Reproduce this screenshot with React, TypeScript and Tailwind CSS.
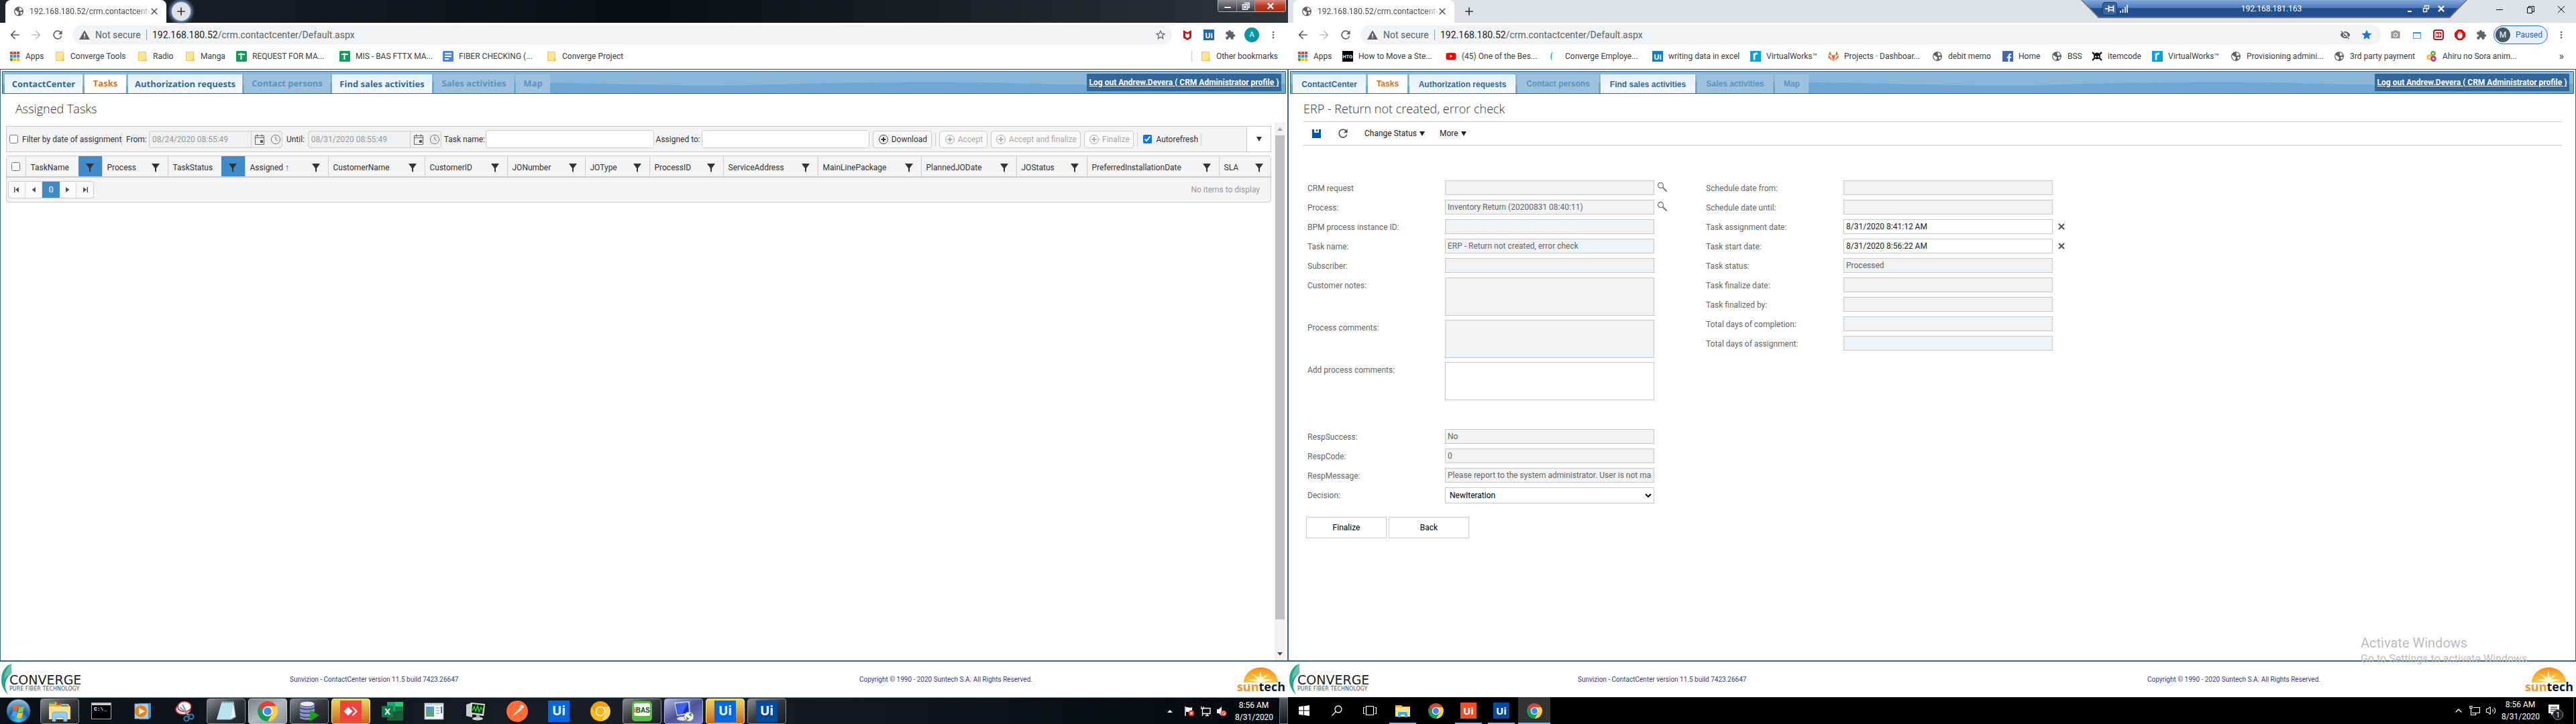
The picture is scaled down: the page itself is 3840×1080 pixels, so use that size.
import React from "react";
import { Clock, ChevronUp, Volume2, X } from "lucide-react";
import { FaYoutube, FaGitlab, FaFacebookF } from "react-icons/fa";
import { MdAdd, MdArrowBack, MdArrowForward, MdClose, MdExtension, MdMoreVert, MdPhotoCamera, MdRefresh, MdStar, MdStarBorder, MdVisibilityOff } from "react-icons/md";

/* ---------- small drawings ---------- */

function Globe() {
  return (
    <svg viewBox="0 0 16 16" className="size-4 shrink-0">
      <circle cx="8" cy="8" r="7" fill="#5f6368" />
      <path d="M2.2 6.5c2 .6 3 .4 3.4 1.6.4 1 1.700.4 2.300 1.400.5.9-.3 1.500-.5 2.500-.1.8-.4 1.200-.9 1.800C3.800 13 2 10.300 2.200 6.500zM8.500 2.200c1.500-.2 4.200 1.300 4.900 3.800-.9.7-1.700.2-2.600.8-.8.6-1.900.3-2.100-.6-.2-.8.700-1.200.5-2-.1-.8-1.200-.9-.7-2zM10.500 9c1-.5 2.200-.2 3.200.3-.5 1.500-1.300 2.700-2.600 3.500-.6-1.200-1.300-3-.6-3.800z" fill="#fff" />
    </svg>
  );
}

function Warning() {
  return (
    <svg viewBox="0 0 16 14" className="h-[14px] w-4 shrink-0">
      <path d="M8 0l8 14H0z" fill="#5f6368" />
      <path d="M7.200 5h1.600v4.500H7.200zM7.200 10.500h1.600v1.600H7.200z" fill="#f1f3f4" />
    </svg>
  );
}

function AppsGrid() {
  const c = ["#ea4335", "#ea4335", "#ea4335", "#34a853", "#4285f4", "#4285f4", "#34a853", "#fbbc05", "#fbbc05"];
  return (
    <svg viewBox="0 0 16 16" className="size-4 shrink-0">
      {c.map((f, i) => (
        <rect key={i} x={1 + (i % 3) * 5} y={1 + Math.floor(i / 3) * 5} width="4" height="4" fill={f} />
      ))}
    </svg>
  );
}

function Folder() {
  return (
    <svg viewBox="0 0 16 16" className="size-4 shrink-0">
      <path d="M2.500 1.500h11v10l1 1v2h-12z" fill="#ffe493" stroke="#f0c855" />
      <path d="M11.500 14.500v-3h2v3z" fill="#fbd667" stroke="#f0c855" />
    </svg>
  );
}

function Sheets() {
  return (
    <svg viewBox="0 0 16 16" className="size-4 shrink-0">
      <rect width="16" height="16" rx="1.500" fill="#0f9d58" />
      <path d="M3 5h10M7.500 3v10" stroke="#fff" strokeWidth="2" />
    </svg>
  );
}

function Docs() {
  return (
    <svg viewBox="0 0 16 16" className="size-4 shrink-0">
      <rect width="16" height="16" rx="1.500" fill="#4285f4" />
      <path d="M3 4h10M3 8h10M3 12h6" stroke="#fff" strokeWidth="1.800" />
    </svg>
  );
}

function Htg() {
  return (
    <svg viewBox="0 0 16 16" className="size-4 shrink-0">
      <rect width="16" height="16" fill="#000" />
      <text x="8" y="11" fontSize="7" fontWeight="700" fill="#fff" textAnchor="middle" fontFamily="Liberation Sans, sans-serif">HTG</text>
    </svg>
  );
}

function Crescent() {
  return (
    <svg viewBox="0 0 16 16" className="size-4 shrink-0">
      <path d="M6 1C1.500 4.500 1.500 10.500 4.500 15 3.500 10 3.700 5.500 6 1z" fill="#22b294" />
    </svg>
  );
}

function UiBox({ className, bg, size = 11 }: { className: string; bg: string; size?: number }) {
  return (
    <span className={"flex shrink-0 items-center justify-center font-['Open_Sans',sans-serif] font-bold text-white " + className} style={{ background: bg, fontSize: size, lineHeight: 1 }}>
      Ui
    </span>
  );
}

function VWorks() {
  return (
    <svg viewBox="0 0 16 16" className="size-4 shrink-0">
      <rect width="16" height="16" fill="#00a4e4" />
      <path d="M6 13.500V3.500M6.500 6c.6-1.700 2.500-2.300 4.500-2" stroke="#fff" strokeWidth="2.600" fill="none" />
    </svg>
  );
}

function Skull() {
  return (
    <svg viewBox="0 0 16 16" className="size-4 shrink-0">
      <path d="M1 2l3 3M15 2l-3 3M1 14l3.500-3.500M15 14l-3.500-3.500" stroke="#111" strokeWidth="2.400" />
      <circle cx="8" cy="7.500" r="5" fill="#111" />
      <circle cx="6" cy="8.500" r="1.200" fill="#ddd" />
      <circle cx="10" cy="8.500" r="1.200" fill="#ddd" />
    </svg>
  );
}

function Rings() {
  return (
    <svg viewBox="0 0 16 16" className="size-4 shrink-0" fill="none" strokeWidth="2.400">
      <circle cx="10" cy="3.800" r="2.600" stroke="#5cb531" />
      <circle cx="4.500" cy="9.500" r="2.800" stroke="#f6b719" />
      <circle cx="10.500" cy="11.500" r="3" stroke="#e5178c" />
    </svg>
  );
}

function McAfee() {
  return (
    <svg viewBox="0 0 16 16" className="size-4">
      <path d="M2 1l6 3.200L14 1v11.500L8 16l-6-3.500zM5 5.500v5.500l3 1.700 3-1.700V5.500L8 7z" fill="#c01818" fillRule="evenodd" />
    </svg>
  );
}

function MiniWindow() {
  return (
    <svg viewBox="0 0 16 16" className="size-4">
      <rect x="2.500" y="4.500" width="11" height="9" fill="#e8f1fe" stroke="#5b9cf0" />
      <rect x="2" y="4" width="12" height="2" fill="#3f87ea" />
    </svg>
  );
}

function RedForward() {
  return (
    <svg viewBox="0 0 16 16" className="size-4">
      <rect x="1" y="1" width="14" height="14" rx="3" fill="#fff" stroke="#a81e1e" strokeWidth="2" />
      <rect x="3.500" y="4" width="9" height="8" rx="1" fill="#c62828" />
      <path d="M4.500 5L8 8l-3.500 3zM8.500 5L12 8l-3.500 3z" fill="#fff" />
    </svg>
  );
}

function RedHand() {
  return (
    <svg viewBox="0 0 16 16" className="size-4">
      <path d="M5 0h6l5 5v6l-5 5H5l-5-5V5z" fill="#e40d0d" />
      <path d="M5.500 8V5M7.200 8V3.500M9 8V4M10.700 9V5.500M5 8v3c0 1 1.500 2 3 2s3-1.500 3-3V8z" stroke="#fff" strokeWidth="1.200" strokeLinecap="round" fill="#fff" />
    </svg>
  );
}

function Magnifier() {
  return (
    <svg viewBox="0 0 16 16" className="size-4">
      <circle cx="5.500" cy="5.500" r="4" fill="none" stroke="#777" strokeWidth="1.300" />
      <path d="M8.500 8.500L14.500 14.500" stroke="#777" strokeWidth="2" />
    </svg>
  );
}

function Funnel() {
  return (
    <svg viewBox="0 0 12 13" className="h-[13px] w-3 shrink-0">
      <path d="M0 0h12L7 7v6L5 11.500V7z" fill="#333" />
    </svg>
  );
}

function CalendarIcon() {
  return (
    <svg viewBox="0 0 16 16" className="size-4">
      <path d="M1.500 2.500h13v13h-13zM1.500 5.500h13M4.500 0v4M11.500 0v4" stroke="#666" fill="none" />
      <rect x="9" y="9" width="4" height="4" fill="#555" />
    </svg>
  );
}

function PlusCircle() {
  return (
    <svg viewBox="0 0 16 16" className="size-4 shrink-0">
      <circle cx="8" cy="8" r="6.500" fill="none" stroke="currentColor" />
      <path d="M4.500 8h7M8 4.500v7" stroke="currentColor" strokeWidth="2" />
    </svg>
  );
}

function ChromeLogo({ className, red = "#db4437", yellow = "#ffcd40", green = "#0f9d58", blue = "#4285f4", ring = "#fff" }: { className: string; red?: string; yellow?: string; green?: string; blue?: string; ring?: string }) {
  return (
    <svg viewBox="2 2 44 44" className={className}>
      <path d="M4.950 13A22 22 0 0 1 43.050 13H24L14.470 29.500z" fill={red} />
      <path d="M43.050 13A22 22 0 0 1 24 46L33.530 29.500 24 13z" fill={yellow} />
      <path d="M24 46A22 22 0 0 1 4.950 13L14.470 29.500H33.530z" fill={green} />
      <circle cx="24" cy="24" r="11" fill={ring} />
      <circle cx="24" cy="24" r="8.500" fill={blue} />
    </svg>
  );
}

/* ---------- browser chrome ---------- */

function BrowserTab() {
  return (
    <div className="ml-2 flex h-[34px] w-60 items-center rounded-t-lg bg-white pl-3 pr-2 text-[#45494d]">
      <Globe />
      <span className="ml-2 w-[178px] whitespace-nowrap bg-linear-to-r from-[#45494d] from-90% to-[#d5d7d9] bg-clip-text text-xs text-transparent">192.168.180.52/crm.contactcente</span>
      <button aria-label="Close tab"><MdClose className="size-4" /></button>
    </div>
  );
}

function AddressBar({ children }: { children?: React.ReactNode }) {
  return (
    <div className="flex h-7 flex-1 items-center rounded-full bg-[#f1f3f4] pl-2.5 pr-2 text-sm text-[#5f6368]">
      <Warning />
      <span className="ml-2 w-[68px] whitespace-nowrap">Not secure</span>
      <span className="mx-2 h-4 w-px bg-[#9aa0a6]" />
      <span className="flex-1"><span className="text-[#202124]">192.168.180.52</span>/crm.contactcenter/Default.aspx</span>
      {children}
    </div>
  );
}

function NavButtons() {
  return (
    <div className="flex w-[108px] items-center gap-3 pl-3 text-[#5f6368]">
      <button aria-label="Back"><MdArrowBack className="size-5" /></button>
      <button aria-label="Forward"><MdArrowForward className="size-5 text-[#bdc0c3]" /></button>
      <button aria-label="Reload"><MdRefresh className="size-5" /></button>
    </div>
  );
}

type Mark = { icon: React.ReactNode; label: string; w: string };

function Bookmarks({ items, children }: { items: Mark[]; children: React.ReactNode }) {
  return (
    <nav aria-label="Bookmarks" className="flex h-[33px] items-start border-b border-[#d5d7da] bg-white pl-[14px] text-xs text-[#3c4043]">
      {items.map((m) => (
        <a key={m.label + m.w} href="#" className={"flex h-7 shrink-0 items-center gap-2 whitespace-nowrap " + m.w}>
          {m.icon}
          {m.label}
        </a>
      ))}
      {children}
    </nav>
  );
}

const LEFT_MARKS: Mark[] = [
  { icon: <AppsGrid />, label: "Apps", w: "w-[67px]" },
  { icon: <Folder />, label: "Converge Tools", w: "w-[123px]" },
  { icon: <Folder />, label: "Radio", w: "w-[71px]" },
  { icon: <Folder />, label: "Manga", w: "w-[77px]" },
  { icon: <Sheets />, label: "REQUEST FOR MA...", w: "w-[154px]" },
  { icon: <Sheets />, label: "MIS - BAS FTTX MA...", w: "w-[154px]" },
  { icon: <Docs />, label: "FIBER CHECKING (...", w: "w-[154px]" },
  { icon: <Folder />, label: "Converge Project", w: "w-[140px]" },
];

const RIGHT_MARKS: Mark[] = [
  { icon: <AppsGrid />, label: "Apps", w: "w-[67px]" },
  { icon: <Htg />, label: "How to Move a Ste...", w: "w-[154px]" },
  { icon: <FaYoutube className="size-4 shrink-0 text-[#ff0000]" />, label: "(45) One of the Bes...", w: "w-[154px]" },
  { icon: <Crescent />, label: "Converge Employe...", w: "w-[154px]" },
  { icon: <UiBox className="size-4 border border-white outline-1 -outline-offset-1 outline-[#1180c4]" bg="#1180c4" />, label: "writing data in excel", w: "w-[146px]" },
  { icon: <VWorks />, label: "VirtualWorks™", w: "w-[116px]" },
  { icon: <FaGitlab className="size-4 shrink-0 text-[#f4622c]" />, label: "Projects · Dashboar...", w: "w-[155px]" },
  { icon: <Globe />, label: "debit memo", w: "w-[105px]" },
  { icon: <span className="flex size-4 shrink-0 items-end justify-end bg-[#4267b2] text-white"><FaFacebookF className="size-3" /></span>, label: "Home", w: "w-[73px]" },
  { icon: <Globe />, label: "BSS", w: "w-[60px]" },
  { icon: <Skull />, label: "itemcode", w: "w-[90px]" },
  { icon: <VWorks />, label: "VirtualWorks™", w: "w-[117px]" },
  { icon: <Globe />, label: "Provisioning admini...", w: "w-[154px]" },
  { icon: <Globe />, label: "3rd party payment", w: "w-[138px]" },
  { icon: <Rings />, label: "Ahiru no Sora anim...", w: "w-[150px]" },
];

/* ---------- contact center page ---------- */

type Tab = { label: string; state: "on" | "off" | "active"; w: string };

const TAB_STYLE = {
  on: "h-7 border-x border-t border-white bg-linear-to-b from-[#e4f0f9] to-[#f3f9fd] text-[#2f6a9c]",
  active: "h-7 bg-white text-[#e0700f]",
  off: "h-7 border-x border-[#a5c8e2] bg-[#9dc1de] text-[#5d93bd]",
};

function TabStrip({ tabs, font }: { tabs: Tab[]; font: string }) {
  return (
    <div className="relative mx-0.5 mt-0.5 flex h-[34px] items-end justify-between border border-[#336699] bg-[#8ab6da]">
      <svg viewBox="0 0 1912 32" preserveAspectRatio="none" className="absolute inset-0 size-full">
        <path d="M0 18C150 22 260 22 400 18S700 14 850 17 1050 22 1150 19 1400 14 1500 17 1750 21 1912 18V32H0z" fill="#6fa7d3" />
      </svg>
      <div className={"relative flex items-end gap-[3px] pl-[3px] " + font}>
        {tabs.map((t) => (
          <button key={t.label} disabled={t.state === "off"} className={"flex items-center justify-center whitespace-nowrap font-bold " + TAB_STYLE[t.state] + " " + t.w}>
            {t.label}
          </button>
        ))}
      </div>
      <a href="#" className="relative mb-[3px] mr-1.5 flex h-[26px] w-[290px] items-center justify-center whitespace-nowrap bg-[#336699] text-xs font-bold text-white underline">
        Log out Andrew.Devera ( CRM Administrator profile )
      </a>
    </div>
  );
}

function Footer() {
  return (
    <footer className="flex h-[53px] shrink-0 items-center bg-white text-[10px]/4 text-[#3b3786]">
      <svg viewBox="0 0 130 50" className="h-[50px] w-[130px] shrink-0">
        <path d="M17 1C8 4 2 13 2 25c0 9 4 17 10 22C6 38 6 24 17 15z" fill="#2aa68a" />
        <path d="M6 28C6 15 11 6 17 1v14C10 19 6 22 6 28z" fill="#67c3ae" />
        <text x="14" y="32" fontSize="19" fontFamily="DejaVu Sans, sans-serif" fill="#222">CONVERGE</text>
        <text x="14" y="41" fontSize="8" fontFamily="DejaVu Sans, sans-serif" fill="#555">PURE FIBER TECHNOLOGY</text>
      </svg>
      <span className="ml-[302px] w-[849px]">Sunvizion - ContactCenter version 11.5 build 7423.26647</span>
      <span className="flex-1 whitespace-nowrap">Copyright © 1990 - 2020 Suntech S.A. All Rights Reserved.</span>
      <svg viewBox="0 0 76 42" className="mr-0.5 h-[42px] w-[76px] shrink-0">
        <defs>
          <radialGradient id="sun" cx="50%" cy="100%" r="100%">
            <stop offset="0" stopColor="#ffe14a" />
            <stop offset="1" stopColor="#f58a1f" />
          </radialGradient>
        </defs>
        <path d="M12 25a25 22 0 0 1 51 0z" fill="url(#sun)" />
        <path d="M37 25L18 21l15-1-9-8 11 6 2-12 2 12 11-6-9 8 15 1z" fill="#fff9d8" />
        <text x="38" y="38" fontSize="18" fontWeight="700" textAnchor="middle" fontFamily="Open Sans, sans-serif" fill="#f7941e">
          sun<tspan fill="#1a1a1a">tech</tspan>
        </text>
      </svg>
    </footer>
  );
}

/* ---------- left window content ---------- */

const BOX = "rounded border border-[#ccc]";

function DateBox({ id, value }: { id: string; value: string }) {
  return (
    <div className={"flex h-[26px] w-[199px] items-center bg-[#eff0f1] " + BOX}>
      <input id={id} disabled defaultValue={value} className="h-full w-[152px] border-r border-[#ccc] pl-1 text-[#999]" />
      <button aria-label="Pick date" className="ml-1"><CalendarIcon /></button>
      <button aria-label="Pick time" className="ml-2 text-[#777]"><Clock className="size-4" strokeWidth={1.500} /></button>
    </div>
  );
}

function ToolButton({ label, w, disabled }: { label: string; w: string; disabled?: boolean }) {
  return (
    <button disabled={disabled} className={"flex h-[26px] items-center justify-center gap-1 whitespace-nowrap bg-[#fafafa] text-[#333] disabled:text-[#aaa] " + BOX + " " + w}>
      <PlusCircle />
      {label}
    </button>
  );
}

function Sep() {
  return <span className="h-5 w-px bg-[#ccc]" />;
}

type Col = { name: string; w: string; on?: boolean };

const COLS: Col[] = [
  { name: "TaskName", w: "w-[114px]", on: true },
  { name: "Process", w: "w-[98px]" },
  { name: "TaskStatus", w: "w-[115px]", on: true },
  { name: "Assigned ↑", w: "w-[124px]" },
  { name: "CustomerName", w: "w-[144px]" },
  { name: "CustomerID", w: "w-[123px]" },
  { name: "JONumber", w: "w-[116px]" },
  { name: "JOType", w: "w-[96px]" },
  { name: "ProcessID", w: "w-[110px]" },
  { name: "ServiceAddress", w: "w-[141px]" },
  { name: "MainLinePackage", w: "w-[154px]" },
  { name: "PlannedJODate", w: "w-[142px]" },
  { name: "JOStatus", w: "w-[105px]" },
  { name: "PreferredInstallationDate", w: "w-[197px]" },
  { name: "SLA", w: "w-[77px]" },
];

function TasksGrid() {
  return (
    <div className={"mt-[5px] overflow-hidden bg-[#f4f4f4] " + BOX}>
      <table className="w-full table-fixed border-collapse text-[#333]">
        <thead>
          <tr className="h-[31px] border-b-2 border-[#ccc]">
            <th className="w-7 border-r border-[#ccc] p-0">
              <input type="checkbox" aria-label="Select all" className="size-[13px] align-middle" />
            </th>
            {COLS.map((c) => (
              <th key={c.name} className={"border-r border-[#ccc] p-0 font-normal last:border-r-0 " + c.w}>
                <div className="flex h-[30px] items-center justify-between pl-[7px]">
                  <span className="pt-1 whitespace-nowrap">{c.name}</span>
                  <button aria-label={"Filter " + c.name} className={c.on ? "flex h-full w-[35px] items-center justify-center bg-[#428bca] pt-1" : "flex h-full w-[35px] items-center justify-center pt-1"}>
                    <Funnel />
                  </button>
                </div>
              </th>
            ))}
          </tr>
        </thead>
      </table>
      <div className="flex h-9 items-center justify-between pl-0.5 pr-4 text-[#999]">
        <div className={"flex h-[26px] overflow-hidden bg-[#fafafa] " + BOX}>
          {["first", "prev", "0", "next", "last"].map((p) => (
            <button key={p} aria-label={p} className={p === "0" ? "w-[26px] bg-[#428bca] text-white" : "flex w-[25px] items-center justify-center border-r border-[#ddd] last:border-r-0"}>
              {p === "0" ? (
                "0"
              ) : (
                <svg viewBox="0 0 8 8" className={p === "next" || p === "last" ? "size-2 rotate-180" : "size-2"}>
                  <path d={p === "first" || p === "last" ? "M0 0h1.500v8H0zM7 0v8L2 4z" : "M7 0v8L1.500 4z"} fill="#555" />
                </svg>
              )}
            </button>
          ))}
        </div>
        <span>No items to display</span>
      </div>
    </div>
  );
}

const LEFT_TABS: Tab[] = [
  { label: "ContactCenter", state: "on", w: "w-[116px]" },
  { label: "Tasks", state: "active", w: "w-[62px]" },
  { label: "Authorization requests", state: "on", w: "w-[170px]" },
  { label: "Contact persons", state: "off", w: "w-[128px]" },
  { label: "Find sales activities", state: "on", w: "w-[149px]" },
  { label: "Sales activities", state: "off", w: "w-[119px]" },
  { label: "Map", state: "off", w: "w-[51px]" },
];

function LeftWindow() {
  return (
    <section className="flex min-h-screen min-w-0 flex-col bg-white">
      <header className="flex h-[34px] justify-between bg-linear-to-r from-[#20242b] via-[#0a0d12] to-[#30353b]">
        <div className="flex items-center">
          <BrowserTab />
          <button aria-label="New tab" className="ml-2 flex size-7 items-center justify-center rounded-full bg-[#dee1e6] text-[#333] shadow-[0_0_4px_3px_#6d8fb5]"><MdAdd className="size-5" /></button>
        </div>
        <div className="mr-[3px] flex h-[18px] w-[102px] overflow-hidden rounded-b border border-t-0 border-[#bbb] text-white">
          <button aria-label="Minimize" className="flex w-7 items-end justify-center border-r border-[#999] bg-linear-to-b from-[#8f9296] to-[#34373b] pb-1"><span className="h-1 w-3 rounded-xs border border-[#444] bg-white" /></button>
          <button aria-label="Restore" className="flex w-[27px] items-center justify-center border-r border-[#999] bg-linear-to-b from-[#8f9296] to-[#34373b]">
            <svg viewBox="0 0 12 12" className="size-3"><path d="M4 1.500h7v7H9M1.500 4h7v7h-7zM4 6.500h2v2H4z" fill="none" stroke="#fff" strokeWidth="1.500" /></svg>
          </button>
          <button aria-label="Close" className="flex flex-1 items-center justify-center bg-linear-to-b from-[#d98a7c] via-[#c03a22] to-[#a03018]"><X className="size-3.5" strokeWidth={4} /></button>
        </div>
      </header>
      <div className="flex h-9 items-center">
        <NavButtons />
        <AddressBar><button aria-label="Bookmark"><MdStarBorder className="size-[18px]" /></button></AddressBar>
        <div className="flex items-center gap-4 pl-[15px] pr-[14px] text-[#5f6368]">
          <McAfee />
          <UiBox className="size-4" bg="#2468b0" />
          <MdExtension className="size-4" />
          <span className="-mx-[3px] flex size-[22px] items-center justify-center rounded-full bg-[#0797a7] text-[11px] text-white">A</span>
          <MdMoreVert className="size-4" />
        </div>
      </div>
      <Bookmarks items={LEFT_MARKS}>
        <a href="#" className="ml-auto mr-[15px] flex h-7 items-center gap-2 whitespace-nowrap"><span className="mr-1 h-4 w-px bg-[#ccc]" /><Folder />Other bookmarks</a>
      </Bookmarks>
      <main className="flex flex-1 flex-col border-x border-t border-b-2 border-[#336699] bg-white text-xs">
        <TabStrip tabs={LEFT_TABS} font="font-['Open_Sans',sans-serif] text-[13px]" />
        <h1 className="pl-[22px] pt-2 font-['Open_Sans',sans-serif] text-lg/7 font-light text-[#333]">Assigned Tasks</h1>
        <div className="mt-[7px] flex flex-1 justify-between">
          <div className="flex min-w-0 flex-1 flex-col pl-2 pr-[5px] pt-[5px]">
            <div className="flex h-[39px] items-center border border-[#ccc] bg-[#f4f4f4] text-[#333]">
              <label className="ml-1 flex w-[167px] items-center gap-1.5 whitespace-nowrap"><input type="checkbox" className="size-[13px]" />Filter by date of assignment</label>
              <Sep />
              <label htmlFor="from" className="ml-1.5 w-[34px]">From:</label>
              <DateBox id="from" value="08/24/2020 08:55:49" />
              <label htmlFor="until" className="ml-1.5 w-8">Until:</label>
              <DateBox id="until" value="08/31/2020 08:55:49" />
              <label htmlFor="tname" className="ml-1 w-[62px] whitespace-nowrap">Task name:</label>
              <input id="tname" className={"h-[27px] w-[251px] min-w-0 grow bg-white " + BOX} />
              <label htmlFor="assigned" className="ml-[3px] w-[68px] whitespace-nowrap">Assigned to:</label>
              <input id="assigned" className={"h-[27px] w-[251px] min-w-0 grow bg-white " + BOX} />
              <div className="ml-[5px] flex items-center gap-[5px]">
                <ToolButton label="Download" w="w-[88px]" />
                <Sep />
                <ToolButton label="Accept" w="w-[72px]" disabled />
                <ToolButton label="Accept and finalize" w="w-[134px]" disabled />
                <ToolButton label="Finalize" w="w-[74px]" disabled />
                <Sep />
              </div>
              <label className="ml-2 flex items-center gap-1.5 pr-1"><input type="checkbox" defaultChecked className="size-[13px]" />Autorefresh</label>
              <Sep />
              <button aria-label="More tools" className="ml-[67px] flex h-full w-9 items-center justify-center border-l border-[#ccc] bg-white">
                <svg viewBox="0 0 8 7" className="h-[7px] w-2"><path d="M0 0h8L4 7z" fill="#333" /></svg>
              </button>
            </div>
            <TasksGrid />
          </div>
          <div className="mr-[3px] flex w-4 shrink-0 flex-col items-center justify-between bg-[#f1f1f1]">
            <svg viewBox="0 0 8 5" className="my-[7px] h-[5px] w-2 shrink-0"><path d="M0 5h8L4 0z" fill="#a3a3a3" /></svg>
            <span className="mb-[42px] w-3.5 flex-1 bg-[#c1c1c1]" />
            <svg viewBox="0 0 8 5" className="my-[7px] h-[5px] w-2 shrink-0"><path d="M0 0h8L4 5z" fill="#505050" /></svg>
          </div>
        </div>
      </main>
      <Footer />
      <Win7Taskbar />
    </section>
  );
}

/* ---------- Windows 7 taskbar ---------- */

const FRAME = {
  none: "",
  grey: "rounded border border-[#8a8e92] bg-linear-to-br from-[#8b8f93] via-[#33373b] to-[#1c2024]",
  light: "rounded border border-[#c5c8ca] bg-linear-to-br from-[#7c7f82] via-[#b5b7b9] to-[#8c8f92]",
  orange: "rounded border border-[#fbe9a0] bg-linear-to-b from-[#e8d860] to-[#c8641c]",
  blue: "rounded border border-[#a9b0e8] bg-linear-to-br from-[#b9bde0] via-[#4b5296] to-[#8088c8]",
};

function Slot({ frame, label, children }: { frame: keyof typeof FRAME; label: string; children: React.ReactNode }) {
  return (
    <button aria-label={label} className={"flex h-[38px] w-[58px] shrink-0 items-center justify-center " + FRAME[frame]}>
      {children}
    </button>
  );
}

function Win7Taskbar() {
  return (
    <footer className="flex h-10 shrink-0 items-center justify-between border-t border-[#7d9098] bg-linear-to-r from-[#0b1016] via-[#1a1f27] to-[#05080c] text-white">
      <div className="flex items-center gap-1">
        <button aria-label="Start" className="flex w-14 justify-center pr-0.5">
          <svg viewBox="0 0 38 38" className="size-[37px]">
            <defs>
              <radialGradient id="orb" cx="50%" cy="90%" r="90%">
                <stop offset="0" stopColor="#3fd0f5" />
                <stop offset=".5" stopColor="#1b5f9c" />
                <stop offset="1" stopColor="#a9c9df" />
              </radialGradient>
            </defs>
            <circle cx="19" cy="19" r="18" fill="url(#orb)" stroke="#2a4d66" />
            <path d="M12 11c3-2 5-1 7 0l-2 8c-2-1-4-2-7 0z" fill="#f0642c" />
            <path d="M20 12c2 1 5 2 8 0l-2 8c-3 2-6 1-8 0z" fill="#8cc63f" />
            <path d="M10 20c3-2 5-1 7 0l-2 8c-2-1-4-2-7 0z" fill="#4aa3e8" />
            <path d="M18 21c2 1 5 2 8 0l-2 8c-3 2-6 1-8 0z" fill="#fcc82e" />
          </svg>
        </button>
        <Slot frame="grey" label="Explorer">
          <svg viewBox="0 0 34 32" className="h-8 w-[34px]">
            <path d="M1 5l3-3h8l2 3h16l2 3v20H2z" fill="#d9b64d" />
            <path d="M3 2h7v3H3z" fill="#4aa84a" />
            <path d="M12 4h8v3h-8z" fill="#d84c3c" />
            <path d="M20 7h9v2h-9z" fill="#3d8ee0" />
            <path d="M1 9h32v19H1z" fill="#f8e08a" />
            <path d="M6 31V20c0-2 2-3 4-3h14c2 0 4 1 4 3v11h-5v-6H11v6z" fill="#8fcdf2" stroke="#5fa8d8" />
          </svg>
        </Slot>
        <Slot frame="none" label="Command Prompt">
          <svg viewBox="0 0 30 25" className="h-[25px] w-[30px]">
            <rect x=".5" y=".5" width="29" height="24" fill="#000" stroke="#aaa" />
            <rect x="1" y="1" width="28" height="3" fill="#ccc" />
            <text x="4" y="12" fontSize="8" fontWeight="700" fill="#fff" fontFamily="Liberation Mono, monospace">C:\_</text>
          </svg>
        </Slot>
        <Slot frame="none" label="Media Player">
          <svg viewBox="0 0 28 26" className="h-[26px] w-7">
            <path d="M8 1h18v21l-4 3H8z" fill="#4f93bf" />
            <rect x="2" y="2" width="20" height="22" fill="#a5d4ee" stroke="#6aa6c8" />
            <circle cx="11" cy="13" r="9" fill="#f07d1a" />
            <path d="M8 8l9 5-9 5z" fill="#fff" />
          </svg>
        </Slot>
        <Slot frame="none" label="Snipping Tool">
          <svg viewBox="0 0 30 32" className="h-8 w-[30px]">
            <ellipse cx="13" cy="13" rx="11" ry="8" fill="#ddd" stroke="#c62b2b" strokeWidth="1.500" />
            <ellipse cx="15" cy="9" rx="10" ry="7.500" fill="#fff" stroke="#c62b2b" strokeWidth="1.500" />
            <path d="M8 10l14 12M12 6l8 16" stroke="#8a98a4" strokeWidth="2" />
            <circle cx="25" cy="24" r="3.500" fill="none" stroke="#2a7fb8" strokeWidth="2" />
            <circle cx="18" cy="27" r="3.500" fill="none" stroke="#2a7fb8" strokeWidth="2" />
          </svg>
        </Slot>
        <Slot frame="grey" label="Notepad">
          <svg viewBox="0 0 32 30" className="h-[30px] w-8">
            <path d="M10 2h18l3 22-7 4H2z" fill="#4b8296" />
            <path d="M9 3h18l-5 24H2z" fill="#b8e3ee" />
            <path d="M27 3l3 20-8 4z" fill="#e9f4f6" />
            <path d="M10 2h18" stroke="#eee" strokeWidth="3" strokeDasharray="1 1" />
          </svg>
        </Slot>
        <Slot frame="light" label="Chrome"><ChromeLogo className="size-[30px]" /></Slot>
        <Slot frame="grey" label="SQL Developer">
          <svg viewBox="0 0 32 32" className="size-8">
            <path d="M2 5v20c0 5 22 5 22 0V5z" fill="#8d93c4" />
            <path d="M2 10c0 4 22 4 22 0M2 16c0 4 22 4 22 0M2 22c0 4 22 4 22 0" fill="none" stroke="#333a70" strokeWidth="1.500" />
            <ellipse cx="13" cy="5" rx="11" ry="4" fill="#e6e8f6" stroke="#4a5090" />
            <path d="M17 14l14 8-14 9z" fill="#17a317" />
          </svg>
        </Slot>
        <Slot frame="orange" label="AnyDesk">
          <svg viewBox="0 0 32 32" className="size-8">
            <rect width="32" height="32" fill="#ef443b" />
            <path d="M12 9.500l6.500 6.500-6.500 6.500L5.500 16zM17 9.500h2.500L26 16l-6.500 6.500H17l6-6.500z" fill="#fff" />
          </svg>
        </Slot>
        <Slot frame="none" label="Excel">
          <svg viewBox="0 0 32 30" className="h-[30px] w-8">
            <rect x="8" y="1" width="12" height="14" fill="#21a366" /><rect x="20" y="1" width="12" height="7" fill="#33c481" />
            <rect x="20" y="8" width="12" height="7" fill="#107c41" /><rect x="8" y="15" width="24" height="14" fill="#185c37" />
            <rect x="0" y="7" width="17" height="17" rx="1" fill="#107c41" />
            <text x="8.500" y="20" fontSize="13" fontWeight="700" fill="#fff" textAnchor="middle" fontFamily="Open Sans, sans-serif">X</text>
          </svg>
        </Slot>
        <Slot frame="none" label="Report">
          <svg viewBox="0 0 30 26" className="h-[26px] w-[30px]">
            <rect x="1" y="1" width="28" height="24" fill="#f4f6f8" stroke="#9aa" />
            <rect x="1" y="1" width="28" height="3" fill="#c8d4e2" />
            <rect x="3" y="6" width="12" height="15" fill="#5ba37a" /><path d="M3 6h12v6H3z" fill="#5f94c4" />
            <path d="M18 8h5M18 12h5M18 16h5" stroke="#889" /><rect x="25" y="6" width="2" height="10" fill="#3f6fb0" />
          </svg>
        </Slot>
        <Slot frame="none" label="Monitor">
          <svg viewBox="0 0 32 30" className="h-[30px] w-8">
            <path d="M2 5l9-3v22l-9-2z" fill="#c8ccc8" /><path d="M9 2l21 2-2 18-20-3z" fill="#d8dcd8" />
            <path d="M11 4l17 2-2 13-16-2z" fill="#062a06" />
            <path d="M11 14l3-6 2 7 3-8 2 9 3-7 2 4" fill="none" stroke="#2fe82f" strokeWidth="1.300" />
            <ellipse cx="19" cy="26" rx="8" ry="2.500" fill="#d0d4d0" /><path d="M17 20h5v5h-5z" fill="#a8aca8" />
          </svg>
        </Slot>
        <Slot frame="none" label="Postman">
          <svg viewBox="0 0 32 32" className="size-8">
            <circle cx="16" cy="16" r="16" fill="#ff6c37" />
            <path d="M8 24l12-13 4-4 1 3-3 4-12 9z" fill="#fff" /><circle cx="23" cy="9" r="3" fill="#fff" stroke="#ff6c37" strokeWidth=".8" />
          </svg>
        </Slot>
        <Slot frame="none" label="UiPath"><UiBox className="size-8" bg="#0067df" size={19} /></Slot>
        <Slot frame="none" label="Chrome Canary"><ChromeLogo className="size-[30px]" red="#f0a010" yellow="#ffd35a" green="#f7bd14" blue="#f5b21c" ring="#fff0c0" /></Slot>
        <Slot frame="grey" label="iBAS">
          <svg viewBox="0 0 32 32" className="size-8">
            <rect x="1" y="1" width="30" height="30" rx="5" fill="#58b848" />
            <rect x="4" y="4" width="24" height="19" rx="3" fill="#eef8e8" />
            <text x="16" y="18" fontSize="10" fontWeight="700" textAnchor="middle" fill="#1d4a16" fontFamily="Liberation Sans, sans-serif"><tspan fill="#c3401a">i</tspan>BAS</text>
          </svg>
        </Slot>
        <Slot frame="blue" label="Remote Desktop">
          <svg viewBox="0 0 32 32" className="size-8">
            <path d="M2 3l23-2 1 19-20 3z" fill="#c9cdd4" /><path d="M4 5l19-2 1 15-17 3z" fill="#1230c8" /><path d="M4 5l19-2-9 17-7 1z" fill="#3c62ec" />
            <ellipse cx="15" cy="27" rx="9" ry="3" fill="#e0e3e6" />
            <circle cx="24" cy="24" r="7" fill="#f5f7f5" stroke="#999" />
            <path d="M20 25l3 2-3 2M28 19l-3 2 3 2" fill="none" stroke="#2c9a2c" strokeWidth="1.800" />
          </svg>
        </Slot>
        <Slot frame="orange" label="UiPath Studio"><UiBox className="size-8" bg="#0067df" size={19} /></Slot>
        <Slot frame="grey" label="UiPath Robot"><UiBox className="size-8" bg="#044a9c" size={19} /></Slot>
      </div>
      <div className="flex h-full items-center">
        <svg viewBox="0 0 8 4" className="mr-[17px] h-1 w-2"><path d="M0 4h8L4 0z" fill="#fff" /></svg>
        <svg viewBox="0 0 16 16" className="mr-2 size-4">
          <path d="M2 1v14" stroke="#fff" strokeWidth="1.500" /><path d="M3 2c3-1 5 2 9 0v7c-3 2-6-1-9 0z" fill="#fff" />
          <circle cx="11" cy="11" r="4.500" fill="#d8231c" /><path d="M9 9l4 4M13 9l-4 4" stroke="#fff" strokeWidth="1.300" />
        </svg>
        <svg viewBox="0 0 16 16" className="mr-2 size-4"><path d="M5 3.500h10v8H4M2 1v3h3V1M3.500 4v11M8 14.500h5M10.500 12v2" fill="none" stroke="#fff" strokeWidth="1.300" /></svg>
        <svg viewBox="0 0 16 16" className="mr-3 size-4">
          <path d="M1 5h3l4-4v14l-4-4H1z" fill="#fff" /><circle cx="11" cy="11" r="4.500" fill="#d8231c" /><circle cx="11" cy="11" r="2.500" fill="none" stroke="#fff" /><path d="M9 9l4 4" stroke="#fff" />
        </svg>
        <div className="mr-2.5 w-14 text-center text-xs/[18px]"><div>8:56 AM</div><div>8/31/2020</div></div>
        <button aria-label="Show desktop" className="h-full w-[13px] border border-[#6d7378] bg-linear-to-b from-[#555b60] to-[#15191d]" />
      </div>
    </footer>
  );
}

/* ---------- right window content ---------- */

const RIGHT_TABS: Tab[] = [
  { label: "ContactCenter", state: "on", w: "w-[109px]" },
  { label: "Tasks", state: "active", w: "w-[59px]" },
  { label: "Authorization requests", state: "on", w: "w-[158px]" },
  { label: "Contact persons", state: "off", w: "w-[121px]" },
  { label: "Find sales activities", state: "on", w: "w-[141px]" },
  { label: "Sales activities", state: "off", w: "w-[113px]" },
  { label: "Map", state: "off", w: "w-[50px]" },
];

const FIELD = "w-[312px] border border-[#c8c8c8] px-[3px] ";

type F = { label: string; value?: string; kind?: "area" | "edit" | "areaEdit"; extra?: "find" | "clear" };

function Field({ f }: { f: F }) {
  const id = f.label.toLowerCase().replace(/\W+/g, "-");
  const area = f.kind === "area" || f.kind === "areaEdit";
  return (
    <div className="flex items-start">
      <label htmlFor={id} className="w-[205px] shrink-0 pt-0.5 leading-5">{f.label}</label>
      {area ? (
        <textarea id={id} readOnly={f.kind === "area"} className={FIELD + (f.kind === "area" ? "block h-[57px] resize-none bg-[#f1f2f4]" : "block h-[57px] resize-none bg-white")} />
      ) : (
        <input id={id} readOnly={!f.kind} defaultValue={f.value} className={FIELD + (f.kind ? "h-[22px] bg-white text-[#222]" : "h-[22px] bg-[#f1f2f4]")} />
      )}
      {f.extra === "find" && <button aria-label={"Find " + f.label} className="ml-1 pt-0.5"><Magnifier /></button>}
      {f.extra === "clear" && <button aria-label={"Clear " + f.label} className="ml-1.5 pt-1"><X className="size-3.5 text-[#555]" strokeWidth={3.500} /></button>}
    </div>
  );
}

const MAIN_FIELDS: F[] = [
  { label: "CRM request", extra: "find" },
  { label: "Process:", value: "Inventory Return (20200831 08:40:11)", extra: "find" },
  { label: "BPM process instance ID:" },
  { label: "Task name:", value: "ERP - Return not created, error check" },
  { label: "Subscriber:" },
];
const AREA_FIELDS: F[] = [
  { label: "Customer notes:", kind: "area" },
  { label: "Process comments:", kind: "area" },
  { label: "Add process comments:", kind: "areaEdit" },
];
const RESP_FIELDS: F[] = [
  { label: "RespSuccess:", value: "No" },
  { label: "RespCode:", value: "0" },
  { label: "RespMessage:", value: "Please report to the system administrator. User is not map" },
];
const DATE_FIELDS: F[] = [
  { label: "Schedule date from:" },
  { label: "Schedule date until:" },
  { label: "Task assignment date:", value: "8/31/2020 8:41:12 AM", kind: "edit", extra: "clear" },
  { label: "Task start date:", value: "8/31/2020 8:56:22 AM", kind: "edit", extra: "clear" },
  { label: "Task status:", value: "Processed" },
  { label: "Task finalize date:" },
  { label: "Task finalized by:" },
  { label: "Total days of completion:" },
  { label: "Total days of assignment:" },
];

function RdpBar() {
  return (
    <div className="absolute right-[162px] top-0 flex h-[27px] w-[576px] items-start bg-[#6a6f78] [clip-path:polygon(0_0,100%_0,550px_100%,26px_100%)]">
      <div className="flex h-[25px] w-full items-center bg-linear-to-b from-[#87abdc] from-0% via-[#4a78b8] via-48% to-[#22508f] to-50% px-8 text-white [clip-path:polygon(2px_0,574px_0,549px_100%,27px_100%)]">
        <button aria-label="Pin" className="flex h-5 w-[22px] items-center justify-center rounded-sm border border-[#1c3a66] bg-[#3a65a0]">
          <svg viewBox="0 0 14 12" className="h-3 w-3.5"><path d="M0 6h5M5.500 1v10M6 4h6M6 8h6M12.500 1v10" stroke="#fff" strokeWidth="1.600" fill="none" /></svg>
        </button>
        <svg viewBox="0 0 12 12" className="ml-1 size-3"><path d="M1 12V9M4.500 12V6.500M8 12V3.500M11 12V0" stroke="#fff" strokeWidth="1.600" /></svg>
        <span className="flex-1 pl-[14px] text-center text-xs">192.168.181.163</span>
        <button aria-label="Minimize session"><svg viewBox="0 0 12 12" className="size-3"><path d="M3 10h6" stroke="#fff" strokeWidth="2" /></svg></button>
        <button aria-label="Restore session" className="ml-3"><svg viewBox="0 0 12 12" className="size-3"><path d="M4.500 4V1.500h6V6H8M2.500 5.500h5v5h-5z" fill="none" stroke="#fff" strokeWidth="1.400" /></svg></button>
        <button aria-label="Close session" className="ml-2.5"><X className="size-3.5" strokeWidth={4} /></button>
      </div>
    </div>
  );
}

function RightWindow() {
  return (
    <section className="relative flex min-h-screen min-w-0 flex-col bg-white">
      <header className="flex h-[34px] justify-between bg-[#dee1e6]">
        <div className="flex items-center">
          <BrowserTab />
          <button aria-label="New tab" className="ml-2 flex size-7 items-center justify-center text-[#333]"><MdAdd className="size-5" /></button>
        </div>
        <div className="flex items-center gap-[34px] pb-1.5 pr-4">
          <button aria-label="Minimize"><svg viewBox="0 0 12 12" className="size-3"><path d="M1 6.500h10" stroke="#000" /></svg></button>
          <button aria-label="Restore"><svg viewBox="0 0 12 12" className="size-3"><path d="M3.500 3V1.500h8v8H9M1.500 3.500h7v8h-7z" fill="none" stroke="#000" /></svg></button>
          <button aria-label="Close"><svg viewBox="0 0 12 12" className="size-3"><path d="M1 1l10 10M11 1L1 11" stroke="#000" /></svg></button>
        </div>
      </header>
      <RdpBar />
      <div className="flex h-9 items-center">
        <NavButtons />
        <AddressBar>
          <button aria-label="Blocked cookies"><MdVisibilityOff className="size-4" /></button>
          <button aria-label="Bookmarked" className="ml-[15px] mr-1"><MdStar className="size-[18px] text-[#1a73e8]" /></button>
        </AddressBar>
        <div className="flex items-center gap-4 pl-[14px] pr-[14px] text-[#5f6368]">
          <MdPhotoCamera className="size-4 text-[#999]" />
          <MiniWindow />
          <RedForward />
          <RedHand />
          <MdExtension className="size-4" />
          <button className="-ml-1.5 -mr-1 flex h-7 w-[81px] items-center gap-2 rounded-full border border-[#1a73e8] bg-[#e8f0fe] pl-0.5 text-xs text-[#1967d2]">
            <span className="flex size-[22px] items-center justify-center rounded-full bg-[#455a64] text-white">M</span>
            Paused
          </button>
          <MdMoreVert className="size-4" />
        </div>
      </div>
      <Bookmarks items={RIGHT_MARKS}>
        <button aria-label="More bookmarks" className="ml-auto mr-[18px] h-7 text-base">»</button>
      </Bookmarks>
      <main className="flex flex-1 flex-col border-x border-t border-b-2 border-[#336699] bg-white text-xs text-[#666]">
        <TabStrip tabs={RIGHT_TABS} font="font-['Liberation_Sans',sans-serif] text-xs" />
        <h1 className="pl-[22px] pt-2 font-['Open_Sans',sans-serif] text-lg/7 font-light text-[#333]">ERP - Return not created, error check</h1>
        <div className="ml-[22px] mr-5 mt-[5px] flex h-9 items-center border-y border-[#ccc] text-[#222]">
          <button aria-label="Save" className="ml-[13px]">
            <svg viewBox="0 0 13 13" className="size-[13px]"><path d="M0 0h3v5h7V0h3v13H0zM6 0h2v3H6z" fill="#0054a6" /></svg>
          </button>
          <button aria-label="Refresh" className="ml-[23px] mr-[22px] text-[#555]"><MdRefresh className="size-5" /></button>
          <button className="flex w-[112px] items-center gap-1">Change Status <svg viewBox="0 0 8 7" className="h-[7px] w-2"><path d="M0 0h8L4 7z" fill="#222" /></svg></button>
          <button className="flex items-center gap-1">More <svg viewBox="0 0 8 7" className="h-[7px] w-2"><path d="M0 0h8L4 7z" fill="#222" /></svg></button>
        </div>
        <form className="flex items-start pl-7 pt-[52px]" onSubmit={(e) => e.preventDefault()}>
          <div className="flex w-[594px] flex-col">
            <div className="flex flex-col gap-[7px]">{MAIN_FIELDS.map((f) => <Field key={f.label} f={f} />)}</div>
            <div className="mt-[7px] flex flex-col gap-1.5">{AREA_FIELDS.map((f) => <Field key={f.label} f={f} />)}</div>
            <div className="mt-[43px] flex flex-col gap-[7px]">
              {RESP_FIELDS.map((f) => <Field key={f.label} f={f} />)}
              <div className="flex items-start">
                <label htmlFor="decision" className="w-[205px] pt-0.5 leading-5">Decision:</label>
                <select id="decision" className="h-6 w-[312px] border border-[#c8c8c8] bg-white pl-0.5 text-black"><option>NewIteration</option></select>
              </div>
            </div>
            <div className="-ml-0.5 mt-5 flex gap-[3px] text-black">
              <button className="h-8 w-[120px] border border-[#ccc] bg-white">Finalize</button>
              <button className="h-8 w-[120px] border border-[#ccc] bg-white">Back</button>
            </div>
          </div>
          <div className="flex flex-col gap-[7px]">{DATE_FIELDS.map((f) => <Field key={f.label} f={f} />)}</div>
        </form>
      </main>
      <Footer />
      <Win10Taskbar />
      <div className="pointer-events-none absolute bottom-[87px] right-[84px] w-[237px] whitespace-nowrap text-[#bcbcbc]">
        <div className="text-xl/7">Activate Windows</div>
        <div className="text-base/5">Go to Settings to activate Windows.</div>
      </div>
    </section>
  );
}

function Task({ label, on, active, children }: { label: string; on?: boolean; active?: boolean; children: React.ReactNode }) {
  return (
    <button aria-label={label} className={active ? "relative flex h-10 w-12 items-center justify-center bg-[#333]" : "relative flex h-10 w-12 items-center justify-center"}>
      {children}
      {on && <span className={active ? "absolute inset-x-0 bottom-0 h-0.5 bg-[#76b9ed]" : "absolute inset-x-1 bottom-0 h-0.5 bg-[#76b9ed]"} />}
    </button>
  );
}

function Win10Taskbar() {
  return (
    <footer className="flex h-10 shrink-0 items-center justify-between bg-black text-white">
      <div className="flex items-center gap-px">
        <Task label="Start"><svg viewBox="0 0 16 16" className="size-4"><path d="M0 2.300L7 1.300v6.200H0zM8 1.200L16 0v7.500H8zM0 8.500h7v6.200l-7-1zM8 8.500h8V16l-8-1.200z" fill="#fff" /></svg></Task>
        <Task label="Search"><svg viewBox="0 0 16 16" className="size-4"><circle cx="10" cy="6" r="5" fill="none" stroke="#fff" strokeWidth="1.300" /><path d="M6.500 9.500L.5 15.500" stroke="#fff" strokeWidth="1.300" /></svg></Task>
        <Task label="Task view"><svg viewBox="0 0 20 16" className="h-4 w-5"><path d="M4.500 1.500h11v13h-11zM2.500 3.500h-2v9h2M17.500 3.500h2v9h-2" fill="none" stroke="#fff" strokeWidth="1.200" /></svg></Task>
        <Task label="Explorer" on>
          <svg viewBox="0 0 22 19" className="h-[19px] w-[22px]"><path d="M0 1h9l2 2h11v15H0z" fill="#e5b43c" /><path d="M0 4h22v14H0z" fill="#ffe08a" /><path d="M4 19v-6c0-1 1-2 2-2h10c1 0 2 1 2 2v6h-4v-4H8v4z" fill="#38aee6" /></svg>
        </Task>
        <Task label="Chrome"><ChromeLogo className="size-[23px]" /></Task>
        <Task label="UiPath Studio" on><UiBox className="size-6" bg="#f04e23" size={15} /></Task>
        <Task label="UiPath Robot" on><UiBox className="size-6" bg="#044a9c" size={15} /></Task>
        <Task label="Chrome window" on active><ChromeLogo className="size-[23px]" /></Task>
      </div>
      <div className="flex h-full items-center">
        <ChevronUp className="mr-2 size-4" />
        <svg viewBox="0 0 16 16" className="mr-2 size-4"><path d="M6 3.500h9.500v8H4M1 1.500h3v3H1zM2.500 5v9.500h7M9.500 12v3" fill="none" stroke="#fff" strokeWidth="1.200" /></svg>
        <Volume2 className="mr-2 size-4" strokeWidth={1.600} />
        <div className="mr-3 w-14 text-center text-xs/[18px]"><div>8:56 AM</div><div>8/31/2020</div></div>
        <div className="relative mr-[15px] h-5 w-6">
          <svg viewBox="0 0 24 20" className="h-5 w-6"><path d="M2 1h16v13h-9l-3 3v-3H2z" fill="#fff" /><path d="M5 5h10M5 8h10M5 11h6" stroke="#000" /></svg>
          <span className="absolute -bottom-1 right-0 flex size-4 items-center justify-center rounded-full border border-[#888] bg-[#222] text-[10px]">1</span>
        </div>
        <span className="mr-[3px] h-full w-px bg-[#555]" />
      </div>
    </footer>
  );
}

export default function App() {
  return (
    <div className="grid min-h-screen grid-cols-2 bg-white font-['Roboto',sans-serif]">
      <LeftWindow />
      <RightWindow />
    </div>
  );
}
